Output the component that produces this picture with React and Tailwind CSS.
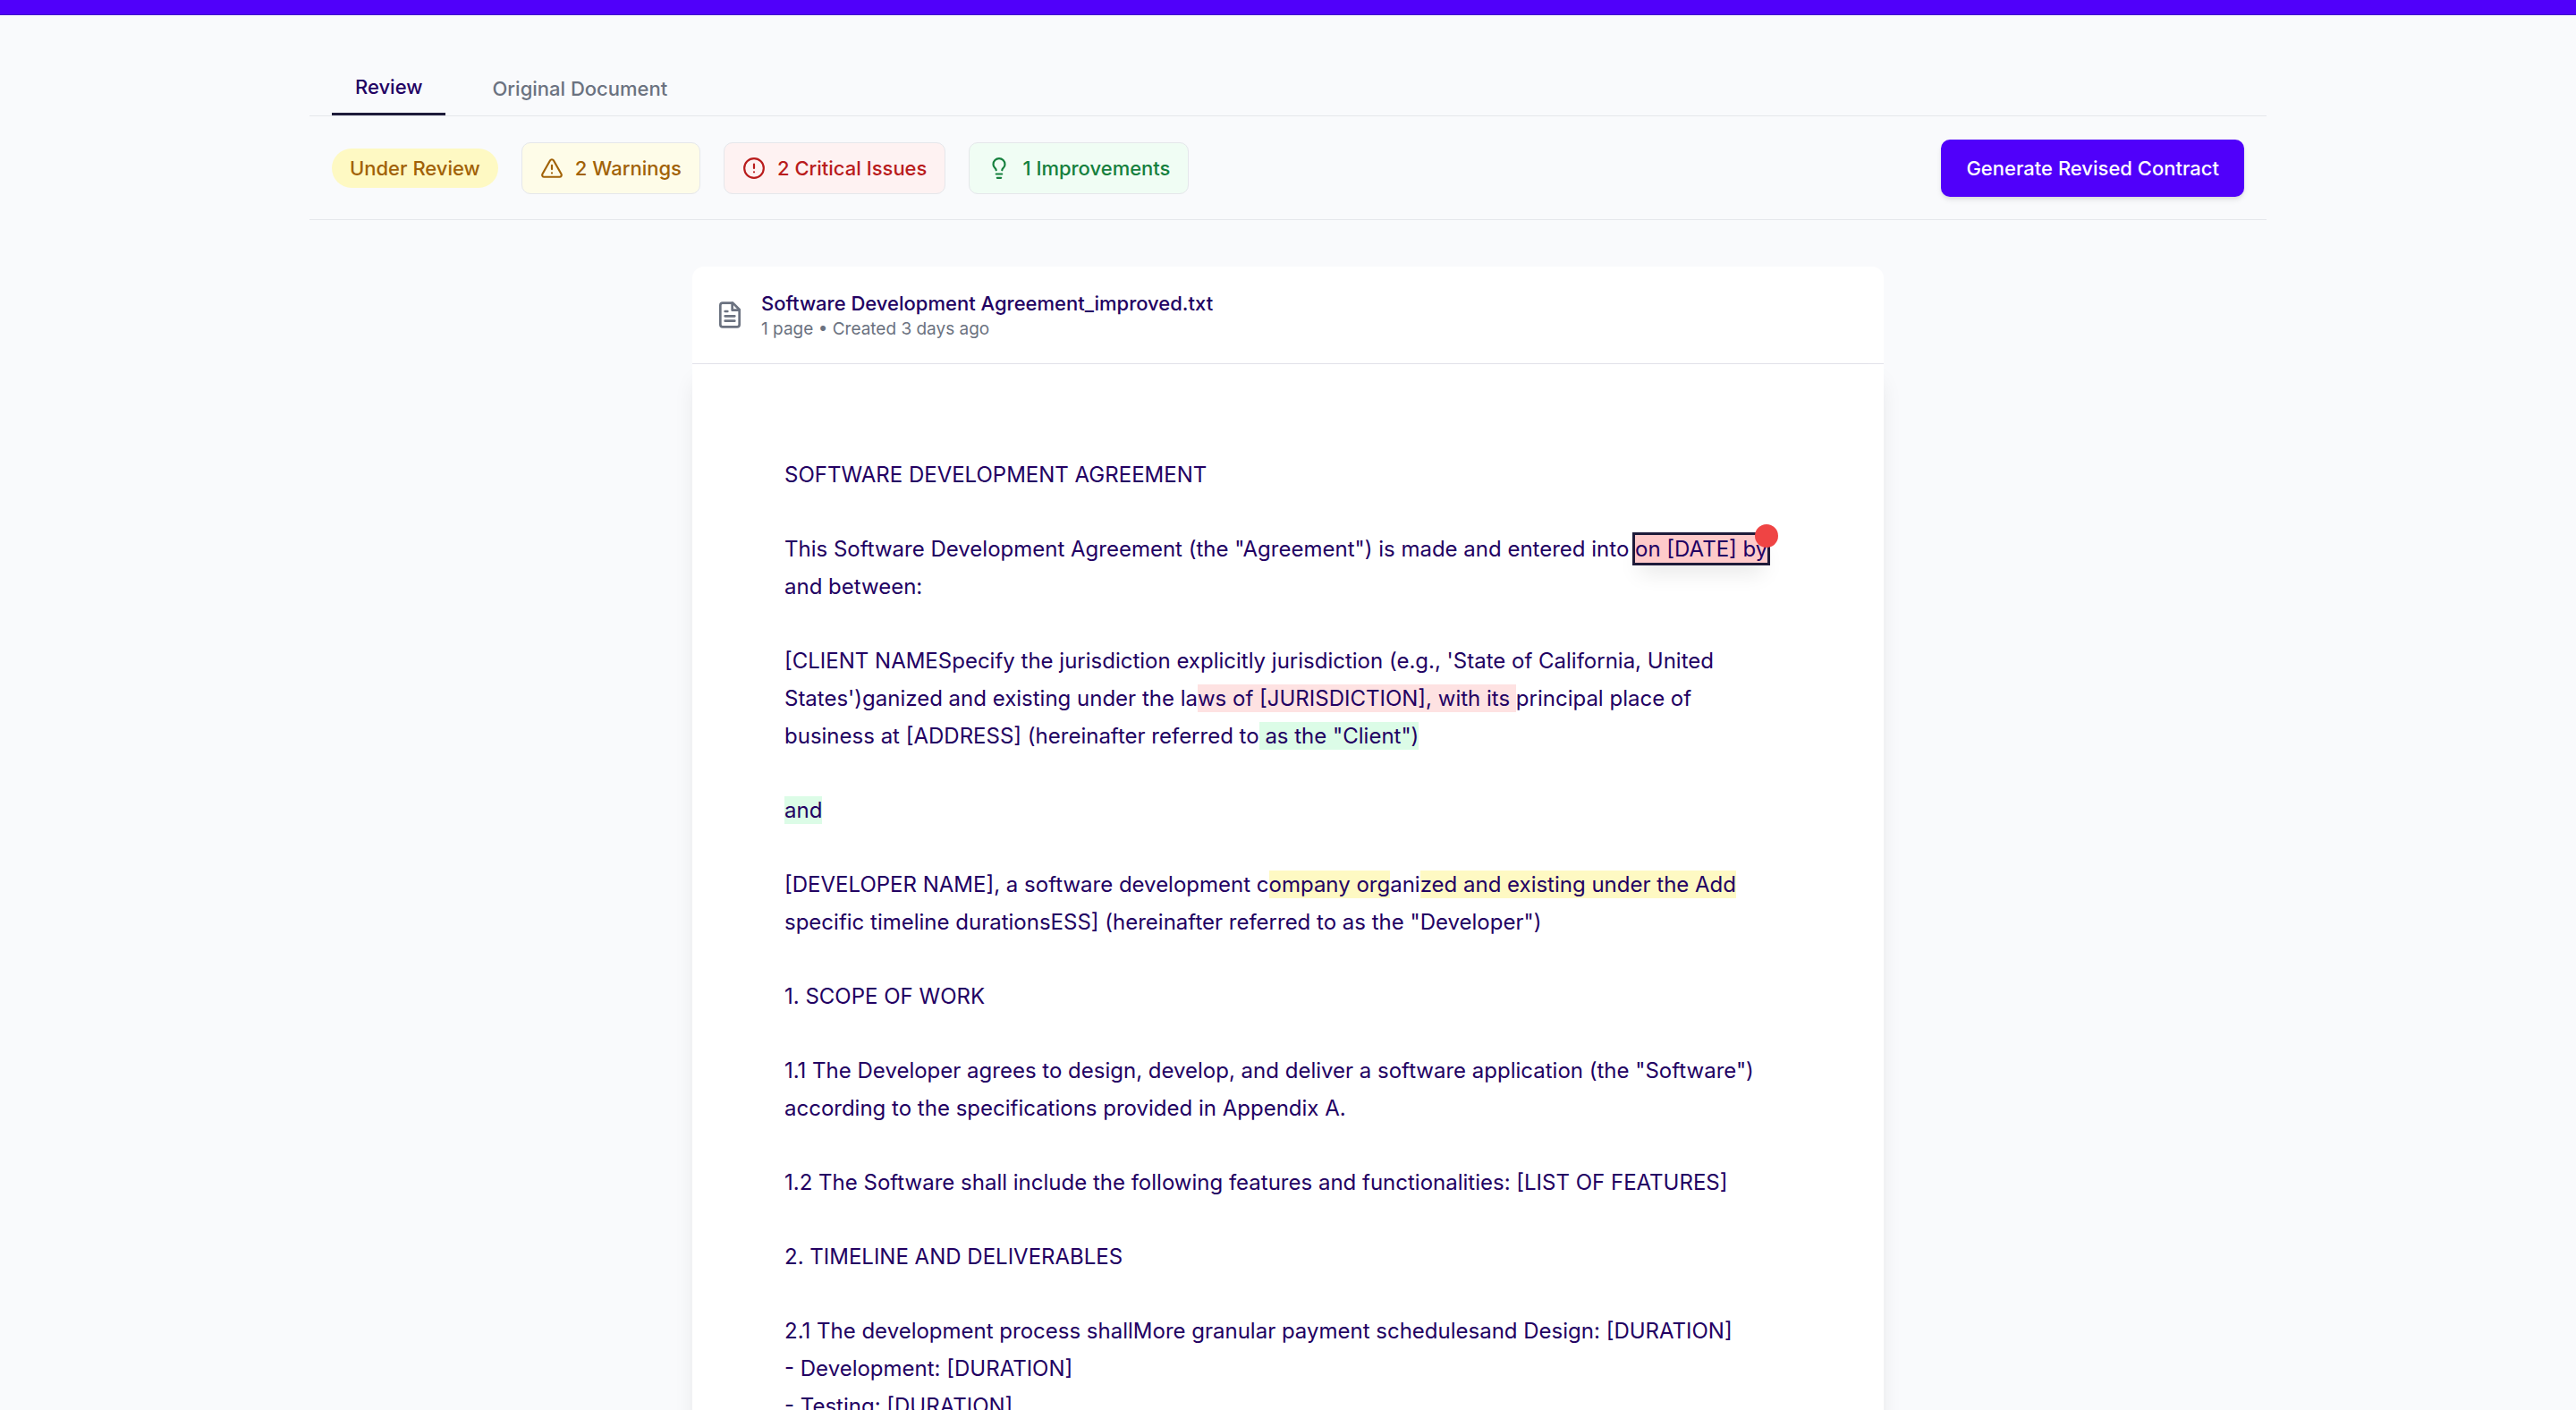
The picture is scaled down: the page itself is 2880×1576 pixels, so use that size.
import { TriangleAlert, CircleAlert, Lightbulb } from "lucide-react";

function DocIcon() {
  return (
    <svg viewBox="0 0 24 24" className="size-8 shrink-0 text-[#6b7280]" fill="none" stroke="currentColor" strokeWidth="2" strokeLinecap="round" strokeLinejoin="round" aria-hidden="true">
      <path d="M14.5 2H6a2 2 0 0 0-2 2v16a2 2 0 0 0 2 2h12a2 2 0 0 0 2-2V7.500z" />
      <path d="M14 2v6h6M10 9H8M16 13H8M16 17H8" />
    </svg>
  );
}

const tones = {
  yellow: "bg-[#fefce8] text-[#a16207]",
  red: "bg-[#fef2f2] text-[#b91c1c]",
  green: "bg-[#f0fdf4] text-[#15803d]",
};

function Chip({ tone, icon: Icon, children }) {
  return (
    <button type="button" className={`flex h-[58px] items-center gap-[13px] rounded-[10px] border border-[#e5e7eb] px-5 ${tones[tone]}`}>
      <Icon className="size-[26px]" strokeWidth={2} />
      {children}
    </button>
  );
}

const marks = { red: "bg-[#fee2e2]", green: "bg-[#dcfce7]", yellow: "bg-[#fef9c3]" };

function Mark({ tone, children }) {
  return <mark className={`py-px text-inherit ${marks[tone]}`}>{children}</mark>;
}

export default function App() {
  return (
    <div className="min-h-screen overflow-hidden bg-[#f9fafc] font-[Inter,sans-serif] text-[#220062]">
      <header className="h-[17px] border-b border-[#3f00c8] bg-[#5000fa]" />
      <main className="mx-auto mt-[52px] w-full max-w-[2188px] text-[22px]/[32px] font-medium">
        <nav role="tablist" className="flex items-stretch gap-[26px] border-b border-[#e5e7eb] px-[25px]">
          <button type="button" role="tab" aria-selected="true" className="border-b-[3px] border-[#1e1b3a] px-[26px] pt-3 pb-[13px]">Review</button>
          <button type="button" role="tab" aria-selected="false" className="px-[26px] py-[14px] text-[#6b7280]">Original Document</button>
        </nav>
        <div className="flex h-[116px] items-center justify-between border-b border-[#e5e7eb] px-[25px]">
          <div className="flex items-center gap-[26px]">
            <span className="rounded-full bg-[#fef9c3] px-5 py-[6px] text-[#a16207]">Under Review</span>
            <Chip tone="yellow" icon={TriangleAlert}>2 Warnings</Chip>
            <Chip tone="red" icon={CircleAlert}>2 Critical Issues</Chip>
            <Chip tone="green" icon={Lightbulb}>1 Improvements</Chip>
          </div>
          <button type="button" className="h-16 rounded-[10px] bg-[#5000fa] px-7 text-white shadow-md">Generate Revised Contract</button>
        </div>
        <article className="mx-auto mt-[52px] w-full max-w-[1332px]">
          <header className="flex h-[109px] items-center gap-[19px] rounded-t-[13px] border-b border-[#e2e2ea] bg-white px-[26px]">
            <DocIcon />
            <div>
              <h1>Software Development Agreement_improved.txt</h1>
              <p className="text-[19px]/[26px] font-normal text-[#6b7280]">1 page • Created 3 days ago</p>
            </div>
          </header>
          <div className="flex flex-col gap-[41px] bg-white pt-[103px] pr-[117px] pb-[103px] pl-[103px] text-[24px]/[42px] font-normal shadow-[0_16px_24px_-5px_rgba(0,0,0,0.1)]">
            <p>SOFTWARE DEVELOPMENT AGREEMENT</p>
            <p>
              This Software Development Agreement (the "Agreement") is made and entered into{" "}
              <mark className="relative bg-[#fecaca] py-px whitespace-nowrap text-inherit shadow-[0_16px_24px_-5px_rgba(0,0,0,0.1)] outline-3 outline-[#1e1b3a]">
                on [DATE] by
                <span className="absolute -top-3 -right-3 size-[26px] rounded-full bg-[#ef4444]" />
              </mark>{" "}
              and between:
            </p>
            <p>
              [CLIENT NAMESpecify the jurisdiction explicitly jurisdiction (e.g., 'State of California, United States')ganized and existing under the la<Mark tone="red">ws of [JURISDICTION], with its </Mark>principal place of business at [ADDRESS] (hereinafter referred to<Mark tone="green"> as the "Client")</Mark>
            </p>
            <p><Mark tone="green">and</Mark></p>
            <p>
              [DEVELOPER NAME], a software development c<Mark tone="yellow">ompany org</Mark>ani<Mark tone="yellow">zed and existing under the Add</Mark> specific timeline durationsESS] (hereinafter referred to as the "Developer")
            </p>
            <p>1. SCOPE OF WORK</p>
            <p>1.1 The Developer agrees to design, develop, and deliver a software application (the "Software") according to the specifications provided in Appendix A.</p>
            <p>1.2 The Software shall include the following features and functionalities: [LIST OF FEATURES]</p>
            <p>2. TIMELINE AND DELIVERABLES</p>
            <p>
              2.1 The development process shallMore granular payment schedulesand Design: [DURATION]
              <br />- Development: [DURATION]
              <br />- Testing: [DURATION]
            </p>
          </div>
        </article>
      </main>
    </div>
  );
}
